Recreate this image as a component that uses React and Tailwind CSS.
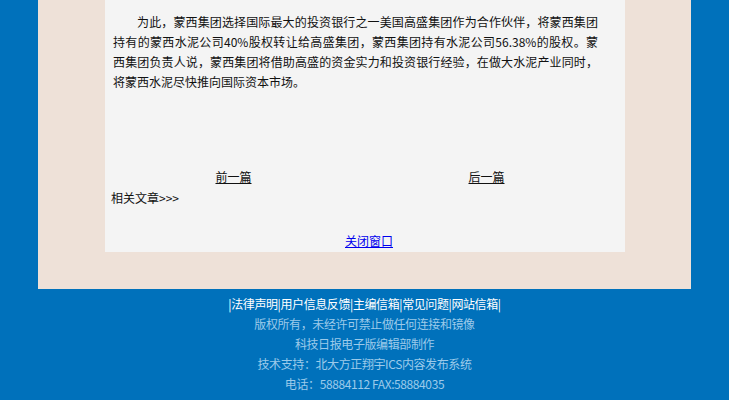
import React from 'react'

const font = { fontFamily: '"Noto Sans CJK SC", "Noto Sans", sans-serif' }

const footerLines = [
  '版权所有，未经许可禁止做任何连接和镜像',
  '科技日报电子版编辑部制作',
  '技术支持：北大方正翔宇ICS内容发布系统',
  '电话：58884112 FAX:58884035',
]

const links = ['法律声明', '用户信息反馈', '主编信箱', '常见问题', '网站信箱']

const App = () => {
  return (
    <div className="min-h-[400px] w-full bg-[#0071bb] text-[12px] leading-[20px]" style={font}>
      {/* Beige frame */}
      <div className="mx-auto w-[653px] bg-[#eee1d8] pb-[37px]">
        {/* Article panel */}
        <div className="ml-[67px] w-[520px] bg-[#f4f4f4] pb-px pt-[12px]">
          <div className="ml-[8px] w-[485px] text-[#111]">
            <p className="pl-[24px] text-justify [text-align-last:justify]">
              为此，蒙西集团选择国际最大的投资银行之一美国高盛集团作为合作伙伴，将蒙西集团
            </p>
            <p className="text-justify [text-align-last:justify]">
              持有的蒙西水泥公司40%股权转让给高盛集团，蒙西集团持有水泥公司56.38%的股权。蒙
            </p>
            <p className="text-justify [text-align-last:justify]">
              西集团负责人说，蒙西集团将借助高盛的资金实力和投资银行经验，在做大水泥产业同时，
            </p>
            <p>将蒙西水泥尽快推向国际资本市场。</p>
          </div>

          {/* Prev / next */}
          <div className="ml-[2px] mt-[75px] flex w-[506px]">
            <div className="flex-1 text-center">
              <a className="text-[#111] underline">前一篇</a>
            </div>
            <div className="flex-1 text-center">
              <a className="text-[#111] underline">后一篇</a>
            </div>
          </div>
          <div className="mt-px pl-[6px] text-[#111]">相关文章&gt;&gt;&gt;</div>

          <div className="mt-[23px] pl-[8px] text-center">
            <a className="text-[#0000ee] underline">关闭窗口</a>
          </div>
        </div>
      </div>

      {/* Footer */}
      <div className="pt-[5px] pb-[6px] text-center tracking-[-0.4px]">
        <div className="text-white">
          |{links.map((l) => (
            <span key={l}>
              {l}|
            </span>
          ))}
        </div>
        {footerLines.map((line) => (
          <div key={line} className="text-[#9ccaea]">
            {line}
          </div>
        ))}
      </div>
    </div>
  )
}

export default App
